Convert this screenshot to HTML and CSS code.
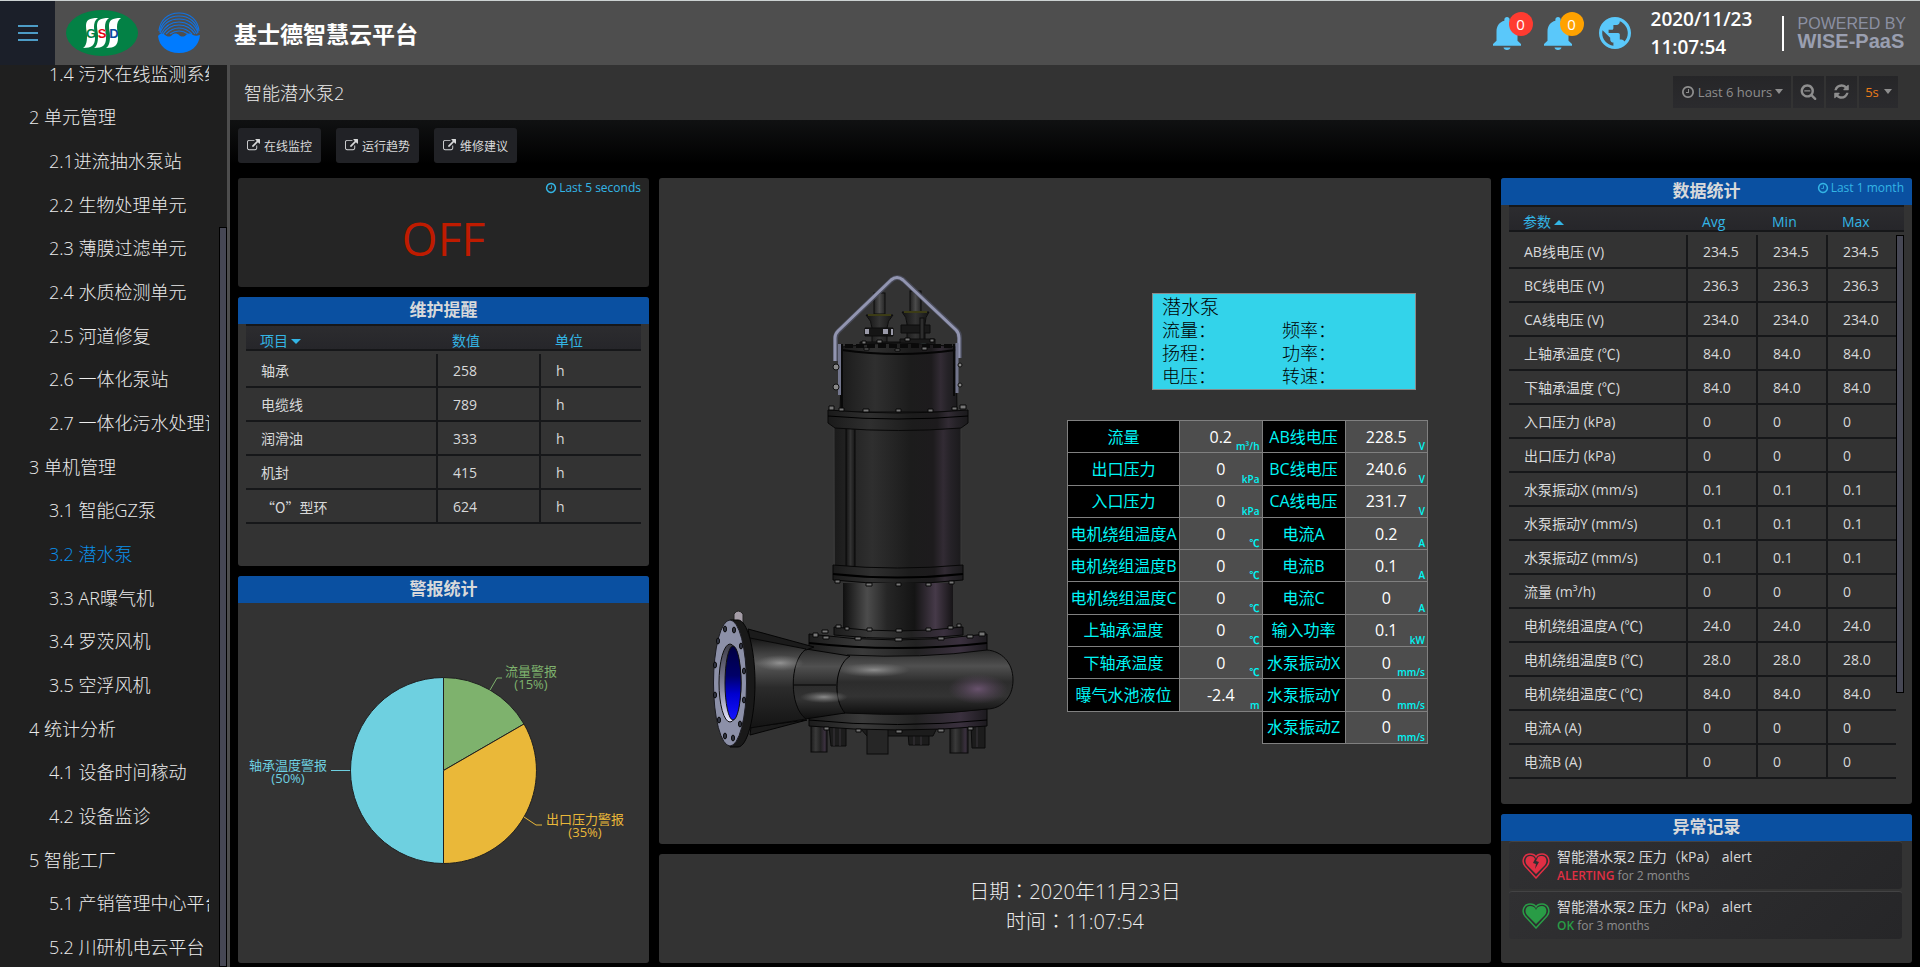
FILE: index.html
```
<!DOCTYPE html>
<html lang="zh-CN">
<head>
  <meta charset="UTF-8">
  <meta name="viewport" content="width=device-width, initial-scale=1.0">
  <title>基士德智慧云平台</title>
  <link rel="stylesheet" href="styles.css">
</head>
<body>
  <!-- Icon set -->
  <svg class="icon-defs" aria-hidden="true">
    <symbol id="icon-clock" viewBox="0 0 1792 1792"><path d="M1024 544v448q0 14-9 23t-23 9h-320q-14 0-23-9t-9-23v-64q0-14 9-23t23-9h224v-352q0-14 9-23t23-9h64q14 0 23 9t9 23zm416 352q0-148-73-273t-198-198-273-73-273 73-198 198-73 273 73 273 198 198 273 73 273-73 198-198 73-273zm224 0q0 209-103 385.500t-279.500 279.500-385.500 103-385.500-103-279.500-279.500-103-385.500 103-385.500 279.500-279.500 385.500-103 385.500 103 279.500 279.500 103 385.500z"/></symbol>
    <symbol id="icon-link" viewBox="0 0 1792 1792"><path d="M1408 928v320q0 119-84.500 203.500t-203.500 84.500h-832q-119 0-203.500-84.500t-84.500-203.500v-832q0-119 84.500-203.500t203.500-84.500h704q14 0 23 9t9 23v64q0 14-9 23t-23 9h-704q-66 0-113 47t-47 113v832q0 66 47 113t113 47h832q66 0 113-47t47-113v-320q0-14 9-23t23-9h64q14 0 23 9t9 23zm384-864v512q0 26-19 45t-45 19-45-19l-176-176-652 652q-10 10-23 10t-23-10l-114-114q-10-10-10-23t10-23l652-652-176-176q-19-19-19-45t19-45 45-19h512q26 0 45 19t19 45z"/></symbol>
    <symbol id="icon-zoom-out" viewBox="0 0 1792 1792"><path d="M1088 800v64q0 13-9.500 22.500t-22.500 9.500h-576q-13 0-22.500-9.500t-9.500-22.500v-64q0-13 9.500-22.500t22.500-9.500h576q13 0 22.500 9.500t9.500 22.500zm128 32q0-185-131.500-316.500t-316.500-131.500-316.500 131.500-131.500 316.500 131.500 316.500 316.500 131.500 316.500-131.500 131.500-316.500zm512 832q0 53-37.500 90.500t-90.500 37.500q-54 0-90-38l-343-342q-179 124-399 124-143 0-273.500-55.500t-225-150-150-225-55.500-273.500 55.500-273.500 150-225 225-150 273.500-55.500 273.500 55.500 225 150 150 225 55.500 273.500q0 220-124 399l343 343q37 37 37 90z"/></symbol>
    <symbol id="icon-refresh" viewBox="0 0 1792 1792"><path d="M1639 1056q0 5-1 7-64 268-268 434.500t-478 166.500q-146 0-282.500-55t-243.500-157l-129 129q-19 19-45 19t-45-19-19-45v-448q0-26 19-45t45-19h448q26 0 45 19t19 45-19 45l-137 137q71 66 161 102t187 36q134 0 250-65t186-179q11-17 53-117 8-23 30-23h192q13 0 22.500 9.500t9.500 22.500zm25-800v448q0 26-19 45t-45 19h-448q-26 0-45-19t-19-45 19-45l138-138q-148-137-349-137-134 0-250 65t-186 179q-11 17-53 117-8 23-30 23h-199q-13 0-22.500-9.500t-9.500-22.500v-7q65-268 270-434.500t480-166.500q146 0 284 55.500t245 156.500l130-129q19-19 45-19t45 19 19 45z"/></symbol>
    <symbol id="icon-bell" viewBox="4 2.500 16 19.500" preserveAspectRatio="none"><path d="M12 22c1.100 0 2-.9 2-1.500h-4c0 .6.890 1.500 2 1.500zM18 16.500v-5.500c0-3.070-1.640-5.640-4.500-6.320V4c0-.83-.67-1.500-1.500-1.500s-1.500.67-1.500 1.500v.68C7.630 5.360 6 7.920 6 11v5.500l-2 2v1h16v-1l-2-2z"/></symbol>
    <symbol id="icon-globe" viewBox="2 2 20 20"><path d="M12 2C6.480 2 2 6.480 2 12s4.480 10 10 10 10-4.480 10-10S17.520 2 12 2zm-1 17.930c-3.950-.49-7-3.850-7-7.930 0-.62.080-1.210.210-1.790L9 15v1c0 1.100.9 2 2 2v1.930zm6.900-2.540c-.26-.81-1-1.390-1.900-1.390h-1v-3c0-.55-.45-1-1-1H8v-2h2c.55 0 1-.45 1-1V7h2c1.100 0 2-.9 2-2v-.41c2.930 1.190 5 4.060 5 7.410 0 2.080-.8 3.970-2.100 5.390z"/></symbol>
  </svg>

  <!-- Top bar -->
  <header class="topbar">
    <button class="menu-btn" aria-label="菜单"><span></span><span></span><span></span></button>
    <svg class="logo-gsd" viewBox="0 0 72 46">
      <ellipse cx="36" cy="23" rx="36" ry="23" fill="#038145"/>
      <g fill="#fff">
        <path d="M32 8c-9 0-12 2-12 8 0 4 1 6 1 10 0 6-1 10-4 12 9 0 12-3 12-10 0-4-1-7-1-11s1-7 4-9z"/>
        <path d="M43 8c-9 0-12 2-12 8 0 4 1 6 1 10 0 6-1 10-4 12 9 0 12-3 12-10 0-4-1-7-1-11s1-7 4-9z"/>
        <path d="M55 8c-9 0-12 2-12 8 0 4 1 6 1 10 0 6-1 10-4 12 9 0 12-3 12-10 0-4-1-7-1-11s1-7 4-9z"/>
      </g>
      <g class="logo-letters">
        <text x="25" y="28" fill="#038145">G</text>
        <text x="36" y="28" fill="#e60012">S</text>
        <text x="48" y="28" fill="#0a4ba0">D</text>
      </g>
    </svg>
    <svg class="logo-water" viewBox="0 0 42 42">
      <path d="M0 24c3-3 5-3 7-1 3 2 5 2 7 0s5-2 7 0 5 2 7 0 5-2 7 0c2 1 4 1 7 0-1 11-9 18-21 18S1 34 0 24z" fill="#007bff"/>
      <g fill="none" stroke="#1272e0" stroke-width="1.200">
        <path d="M1 19C2 8 10 1 21 1s19 7 20 18"/>
        <path d="M2 20C3 10 11 4 21 4s18 6 19 16"/>
        <path d="M2 21C5 12 12 7 21 7s16 5 19 14"/>
        <path d="M3 22c4-8 10-12 18-12s14 4 18 12"/>
        <path d="M5 22c4-6 9-9 16-9s12 3 16 9"/>
        <path d="M8 22c4-4 8-6 13-6s9 2 13 6"/>
        <path d="M12 22c3-2 6-3 9-3s6 1 9 3"/>
      </g>
    </svg>
    <h1 class="site-title">基士德智慧云平台</h1>

    <div class="topbar-right">
      <button class="bell-btn" aria-label="告警"><svg><use href="#icon-bell"/></svg><span class="badge badge-red">0</span></button>
      <button class="bell-btn" aria-label="通知"><svg><use href="#icon-bell"/></svg><span class="badge badge-orange">0</span></button>
      <button class="globe-btn" aria-label="语言"><svg><use href="#icon-globe"/></svg></button>
      <div class="clock">2020/11/23<br>11:07:54</div>
      <div class="powered"><span class="powered-by">POWERED BY</span><span class="powered-name">WISE-PaaS</span></div>
    </div>
  </header>

  <div class="layout">
    <!-- Side menu -->
    <nav class="sidebar">
      <ul>
        <li class="sub"><a href="#">1.4 污水在线监测系统</a></li>
        <li><a href="#">2 单元管理</a></li>
        <li class="sub"><a href="#">2.1进流抽水泵站</a></li>
        <li class="sub"><a href="#">2.2 生物处理单元</a></li>
        <li class="sub"><a href="#">2.3 薄膜过滤单元</a></li>
        <li class="sub"><a href="#">2.4 水质检测单元</a></li>
        <li class="sub"><a href="#">2.5 河道修复</a></li>
        <li class="sub"><a href="#">2.6 一体化泵站</a></li>
        <li class="sub"><a href="#">2.7 一体化污水处理设备</a></li>
        <li><a href="#">3 单机管理</a></li>
        <li class="sub"><a href="#">3.1 智能GZ泵</a></li>
        <li class="sub active"><a href="#">3.2 潜水泵</a></li>
        <li class="sub"><a href="#">3.3 AR曝气机</a></li>
        <li class="sub"><a href="#">3.4 罗茨风机</a></li>
        <li class="sub"><a href="#">3.5 空浮风机</a></li>
        <li><a href="#">4 统计分析</a></li>
        <li class="sub"><a href="#">4.1 设备时间稼动</a></li>
        <li class="sub"><a href="#">4.2 设备监诊</a></li>
        <li><a href="#">5 智能工厂</a></li>
        <li class="sub"><a href="#">5.1 产销管理中心平台</a></li>
        <li class="sub"><a href="#">5.2 川研机电云平台</a></li>
      </ul>
      <div class="sidebar-thumb"></div>
    </nav>

    <main class="main">
      <div class="page-bar">
        <h2>智能潜水泵2</h2>
        <div class="time-tools">
          <button class="tool tool-range"><svg><use href="#icon-clock"/></svg>Last 6 hours<i class="caret"></i></button>
          <button class="tool tool-icon" aria-label="缩小"><svg><use href="#icon-zoom-out"/></svg></button>
          <button class="tool tool-icon" aria-label="刷新"><svg><use href="#icon-refresh"/></svg></button>
          <button class="tool tool-interval">5s<i class="caret"></i></button>
        </div>
      </div>

      <div class="dashboard">
        <div class="links">
          <a class="link-btn" href="#"><svg><use href="#icon-link"/></svg>在线监控</a>
          <a class="link-btn" href="#"><svg><use href="#icon-link"/></svg>运行趋势</a>
          <a class="link-btn" href="#"><svg><use href="#icon-link"/></svg>维修建议</a>
        </div>

        <div class="panels">
          <!-- Status -->
          <section class="panel panel-status">
            <span class="panel-time"><svg><use href="#icon-clock"/></svg>Last 5 seconds</span>
            <p class="status-value">OFF</p>
          </section>

          <!-- Maintenance -->
          <section class="panel panel-maintain">
            <h3 class="panel-title">维护提醒</h3>
            <div class="table-wrap">
              <table class="data-table maintain-table">
                <thead>
                  <tr><th>项目<i class="caret"></i></th><th>数值</th><th>单位</th></tr>
                </thead>
                <tbody>
                  <tr><td>轴承</td><td>258</td><td>h</td></tr>
                  <tr><td>电缆线</td><td>789</td><td>h</td></tr>
                  <tr><td>润滑油</td><td>333</td><td>h</td></tr>
                  <tr><td>机封</td><td>415</td><td>h</td></tr>
                  <tr><td class="cjk">“O”型环</td><td>624</td><td>h</td></tr>
                </tbody>
              </table>
            </div>
          </section>

          <!-- Alarm pie -->
          <section class="panel panel-pie">
            <h3 class="panel-title">警报统计</h3>
            <svg class="pie" viewBox="0 0 395 336">
              <g stroke="#1f1f20" stroke-width="1">
                <path d="M197.500 167.500V74.500A93 93 0 0 1 278 121Z" fill="#7eb26d"/>
                <path d="M197.500 167.500L278 121A93 93 0 0 1 197.500 260.500Z" fill="#eab839"/>
                <path d="M197.500 167.500V260.500A93 93 0 0 1 197.500 74.500Z" fill="#6ed0e0"/>
              </g>
              <g fill="none" stroke-width="1">
                <path d="M244 87l7-12h5" stroke="#7eb26d"/>
                <path d="M278 214l12 8h6" stroke="#eab839"/>
                <path d="M104 167.500H85" stroke="#6ed0e0"/>
              </g>
              <g class="pie-labels">
                <text x="285" y="73" fill="#7eb26d">流量警报</text>
                <text x="285" y="86" fill="#7eb26d">(15%)</text>
                <text x="339" y="221" fill="#eab839">出口压力警报</text>
                <text x="339" y="234" fill="#eab839">(35%)</text>
                <text x="42" y="167" fill="#6ed0e0">轴承温度警报</text>
                <text x="42" y="180" fill="#6ed0e0">(50%)</text>
              </g>
            </svg>
          </section>

          <!-- Pump -->
          <section class="panel panel-pump">
            <svg class="pump" viewBox="710 273 305 484">
              <defs>
                <linearGradient id="body">
                  <stop offset="0" stop-color="#1a1a1a"/><stop offset=".12" stop-color="#232323"/>
                  <stop offset=".3" stop-color="#2f2f2f"/><stop offset=".6" stop-color="#1c1c1c"/>
                  <stop offset=".78" stop-color="#1d1b1d"/><stop offset=".86" stop-color="#322b34"/>
                  <stop offset=".92" stop-color="#252227"/><stop offset="1" stop-color="#1b1a1c"/>
                </linearGradient>
                <linearGradient id="neck">
                  <stop offset="0" stop-color="#0f0f0f"/><stop offset=".22" stop-color="#4c4c4c"/>
                  <stop offset=".4" stop-color="#262626"/><stop offset=".65" stop-color="#141414"/>
                  <stop offset=".84" stop-color="#463a49"/><stop offset="1" stop-color="#161416"/>
                </linearGradient>
                <linearGradient id="plate">
                  <stop offset="0" stop-color="#1c1c1c"/><stop offset=".3" stop-color="#3a3a3a"/>
                  <stop offset=".6" stop-color="#222"/><stop offset=".85" stop-color="#3a303e"/>
                  <stop offset="1" stop-color="#1c1a1e"/>
                </linearGradient>
                <linearGradient id="volute" x1="0" y1="0" x2="0" y2="1">
                  <stop offset="0" stop-color="#2b2b2b"/><stop offset=".25" stop-color="#505050"/>
                  <stop offset=".5" stop-color="#2c2c2c"/><stop offset=".72" stop-color="#333"/>
                  <stop offset="1" stop-color="#0e0e0e"/>
                </linearGradient>
                <linearGradient id="cone" x1="0" y1="0" x2="0" y2="1">
                  <stop offset="0" stop-color="#161616"/><stop offset=".28" stop-color="#5a5a5a"/>
                  <stop offset=".55" stop-color="#2b2b2b"/><stop offset="1" stop-color="#141414"/>
                </linearGradient>
                <linearGradient id="stem">
                  <stop offset="0" stop-color="#222"/><stop offset=".5" stop-color="#4b4b4b"/><stop offset="1" stop-color="#242424"/>
                </linearGradient>
                <linearGradient id="gland">
                  <stop offset="0" stop-color="#121212"/><stop offset=".5" stop-color="#333"/><stop offset="1" stop-color="#141414"/>
                </linearGradient>
                <linearGradient id="water" x1="0" y1="0" x2="0" y2="1">
                  <stop offset="0" stop-color="#000040"/><stop offset=".4" stop-color="#000068"/>
                  <stop offset=".65" stop-color="#0000d0"/><stop offset="1" stop-color="#1414ff"/>
                </linearGradient>
                <linearGradient id="bore" x1="0" y1="0" x2="0" y2="1">
                  <stop offset="0" stop-color="#3c3c48"/><stop offset=".6" stop-color="#8c8ca4"/><stop offset="1" stop-color="#e6e6ff"/>
                </linearGradient>
                <radialGradient id="shine"><stop offset="0" stop-color="#a0a0a0" stop-opacity=".8"/><stop offset="1" stop-color="#808080" stop-opacity="0"/></radialGradient>
                <radialGradient id="violet"><stop offset="0" stop-color="#6f5674" stop-opacity=".9"/><stop offset="1" stop-color="#5a465e" stop-opacity="0"/></radialGradient>
              </defs>

              <!-- feet -->
              <g fill="#1c1c1c" stroke="#0b0b0b">
                <path d="M829 726h17v20h-15zM908 733h21v12h-20zM971 725h14v23h-13z"/>
                <path d="M834 727v19M840 727v19M914 735v10M921 735v10M977 727v20" stroke="#3a363c"/>
                <rect x="811" y="724" width="16" height="28" fill="url(#plate)"/>
                <rect x="950" y="724" width="18" height="29" fill="url(#plate)"/>
                <path d="M860 728h77l-4 8h-66z"/>
                <rect x="867" y="727" width="21" height="27" fill="#262626"/>
              </g>

              <!-- cable glands -->
              <g stroke="#0d0d0d">
                <rect x="874" y="293" width="11" height="21" fill="url(#stem)"/>
                <path d="M866 315h27q-6 6-6 13v16h-15v-16q0-7-6-13z" fill="url(#gland)"/>
                <path d="M865 328h28v8h-28z" fill="#151515"/>
                <rect x="910" y="291" width="11" height="21" fill="url(#stem)"/>
                <path d="M902 312h27q-4 5-4 12v20h-18v-20q0-7-5-12z" fill="url(#gland)"/>
                <path d="M901 325h29v8h-29z" fill="#191919"/>
                <rect x="920" y="318" width="4" height="26" fill="#2d2d2d"/>
                <path d="M860 342h40v6h-40zM900 339h35v8h-35z" fill="#1a1a1a"/>
              </g>
              <path d="M868 315h23M904 312h23" stroke="#3c3c16" stroke-width="2"/>
              <path d="M865 329h4v5h-4zM883 329h5v5h-5zM891 329h2v6h-2z" fill="#9a9aa8"/>
              <path d="M916 345q6-4 13 0l-6 2z" fill="#6d8685"/>

              <!-- motor -->
              <path d="M842 347q56-8 114 0l1 65H840z" fill="url(#body)" stroke="#0a0a0a"/>
              <path d="M842 350q56 8 114 0" fill="none" stroke="#050505" stroke-width="2"/>
              <path d="M845 346h109" stroke="#0a0a0a" stroke-width="4" stroke-dasharray="8 3"/>
              <path d="M834 426h127v142H835z" fill="url(#body)"/>
              <path d="M834 426v142M961 426v142" stroke="#3b3b3b"/>
              <rect x="846" y="426" width="9" height="141" fill="url(#gland)" stroke="#080808"/>
              <path d="M835 425q62 9 126 0v3q-62 5-126 0z" fill="#070707"/>
              <path d="M828 410q70 6 140 0v13l-7 5q-62 5-126 0l-7-5z" fill="url(#body)" stroke="#090909"/>
              <path d="M828 416q70 6 140 0" fill="none" stroke="#000"/>
              <path d="M833 565q64 6 130 0v15q-64 7-130 0z" fill="url(#body)" stroke="#070707"/>
              <path d="M833 574q64 7 130 0" fill="none" stroke="#000" stroke-width="2"/>
              <path d="M843 583h110v50H843z" fill="url(#neck)"/>

              <!-- handle -->
              <g fill="none">
                <path d="M835.500 361v-23q0-4 3-7l53-51q6-5 12 0l53 50q3 3 3 8v20" stroke="#484a58" stroke-width="5"/>
                <path d="M835 361v-23q0-4 3-7l53-51q6-5 12 0l53 50q3 3 3 8v20" stroke="#9295b0" stroke-width="3"/>
                <path d="M839.500 344v51M957 343v50" stroke="#73768d" stroke-width="3"/>
                <path d="M842 344v66M954 344v52" stroke="#090909" stroke-width="2"/>
              </g>
              <g fill="#888" stroke="#111">
                <circle cx="836" cy="367" r="3"/><circle cx="836" cy="387" r="3"/>
                <circle cx="960" cy="365" r="2"/><circle cx="960" cy="385" r="2"/>
              </g>

              <!-- volute -->
              <path d="M809 709q88 10 178 0v17q-88 8-178 0z" fill="url(#plate)" stroke="#060606"/>
              <path d="M809 720q88 9 178 0" fill="none" stroke="#000"/>
              <path d="M834 627q64 8 129 0v8q-64 7-129 0z" fill="url(#plate)" stroke="#080808"/>
              <path d="M809 634q88 12 178 0v20q-88 12-178 0z" fill="url(#plate)" stroke="#060606"/>
              <path d="M809 643q88 10 178 0" fill="none" stroke="#000" stroke-width="2"/>
              <path d="M847 655q75 4 140-5c14 1 26 12 26 30s-12 29-26 29q-65 8-144 4c-8-12-10-42 4-58z" fill="url(#volute)" stroke="#090909"/>
              <ellipse cx="874" cy="670" rx="36" ry="7" fill="url(#shine)"/>
              <ellipse cx="978" cy="689" rx="30" ry="15" fill="url(#violet)"/>
              <path d="M806 649l44 7c-16 10-17 44-5 57l-40 6c-16-12-17-58 1-70z" fill="url(#volute)" stroke="#050505"/>
              <ellipse cx="824" cy="697" rx="24" ry="6" fill="url(#shine)"/>
              <path d="M792 685h44" stroke="#050505"/>
              <path d="M748 629l66 18-8 3-56-11zM750 735l57-15-56 7z" fill="#1b1b1b" stroke="#050505"/>
              <path d="M750 638l56 11c-17 12-17 58 0 70l-56 9z" fill="url(#cone)" stroke="#080808"/>
              <ellipse cx="780" cy="663" rx="24" ry="8" fill="url(#shine)"/>

              <!-- outlet flange -->
              <path d="M734 614q4-6 9 0v11h-9z" fill="#a49ca6" stroke="#222"/>
              <path d="M730 620h8c9 0 17 28 17 63s-8 64-17 64h-8z" fill="#191919" stroke="#050505"/>
              <ellipse cx="730" cy="683" rx="16.500" ry="63" fill="#8c90a8" stroke="#1c1c22"/>
              <ellipse cx="730" cy="683" rx="11" ry="39" fill="url(#bore)" stroke="#111"/>
              <ellipse cx="733" cy="683" rx="8" ry="37" fill="url(#water)" stroke="#111"/>
              <g fill="#333645" stroke="#0a0a0a">
                <ellipse cx="725" cy="629" rx="1.500" ry="3"/><ellipse cx="734" cy="630" rx="1.500" ry="3"/>
                <ellipse cx="718" cy="641" rx="1.500" ry="3"/><ellipse cx="741" cy="646" rx="1.500" ry="3"/>
                <ellipse cx="715" cy="665" rx="1.500" ry="3"/><ellipse cx="744" cy="671" rx="1.500" ry="3"/>
                <ellipse cx="715" cy="695" rx="1.500" ry="3"/><ellipse cx="744" cy="700" rx="1.500" ry="3"/>
                <ellipse cx="719" cy="720" rx="1.500" ry="3"/><ellipse cx="740" cy="724" rx="1.500" ry="3"/>
                <ellipse cx="725" cy="736" rx="1.500" ry="3"/><ellipse cx="733" cy="738" rx="1.500" ry="3"/>
              </g>

              <!-- bolts -->
              <g fill="#777" stroke="#080808">
                <path d="M829 406h5v4h-5zM839 408h5v3h-5zM863 409h6v3h-6zM896 409h5v3h-5zM928 409h5v3h-5zM952 407h5v3h-5zM960 405h6v4h-6z"/>
                <path d="M864 348h5v2h-5zM895 349h5v2h-5zM922 347h5v3h-5zM877 340h5v3h-5zM862 341h4v3h-4zM905 338h5v3h-5zM930 339h4v3h-4z"/>
                <path d="M835 580h5v3h-5zM866 583h6v3h-6zM896 583h5v3h-5zM926 583h5v3h-5zM949 581h5v3h-5z"/>
                <path d="M836 625h5v3h-5zM845 627h4v3h-4zM867 628h5v3h-5zM896 629h6v3h-6zM926 628h5v3h-5zM948 626h5v3h-5zM957 624h4v3h-4z"/>
                <path d="M813 633h5v4h-5zM822 630h6v3h-6zM823 636h6v3h-6zM855 637h6v3h-6zM895 638h7v3h-7zM938 637h6v3h-6zM967 635h6v3h-6zM979 632h6v4h-6z"/>
                <path d="M824 727h5v3h-5zM856 729h5v3h-5zM896 730h6v3h-6zM938 729h6v3h-6zM968 727h5v3h-5z"/>
              </g>
            </svg>

            <div class="pump-info">
              <dl class="spec-box">
                <dt class="spec-name">潜水泵</dt>
                <dt>流量：</dt><dt>频率：</dt>
                <dt>扬程：</dt><dt>功率：</dt>
                <dt>电压：</dt><dt>转速：</dt>
              </dl>
              <table class="live-table">
                <tr><th>流量</th><td>0.2<small>m³/h</small></td><th>AB线电压</th><td>228.5<small>V</small></td></tr>
                <tr><th>出口压力</th><td>0<small>kPa</small></td><th>BC线电压</th><td>240.6<small>V</small></td></tr>
                <tr><th>入口压力</th><td>0<small>kPa</small></td><th>CA线电压</th><td>231.7<small>V</small></td></tr>
                <tr><th>电机绕组温度A</th><td>0<small>℃</small></td><th>电流A</th><td>0.2<small>A</small></td></tr>
                <tr><th>电机绕组温度B</th><td>0<small>℃</small></td><th>电流B</th><td>0.1<small>A</small></td></tr>
                <tr><th>电机绕组温度C</th><td>0<small>℃</small></td><th>电流C</th><td>0<small>A</small></td></tr>
                <tr><th>上轴承温度</th><td>0<small>℃</small></td><th>输入功率</th><td>0.1<small>kW</small></td></tr>
                <tr><th>下轴承温度</th><td>0<small>℃</small></td><th>水泵振动X</th><td>0<small>mm/s</small></td></tr>
                <tr><th>曝气水池液位</th><td>-2.4<small>m</small></td><th>水泵振动Y</th><td>0<small>mm/s</small></td></tr>
                <tr><td class="blank" colspan="2"></td><th>水泵振动Z</th><td>0<small>mm/s</small></td></tr>
              </table>
            </div>
          </section>

          <!-- Date -->
          <section class="panel panel-date" lang="zh-TW">
            <p>日期：2020年11月23日</p>
            <p>时间：11:07:54</p>
          </section>

          <!-- Statistics -->
          <section class="panel panel-stats">
            <h3 class="panel-title">数据统计</h3>
            <span class="panel-time"><svg><use href="#icon-clock"/></svg>Last 1 month</span>
            <div class="table-wrap has-scroll">
              <table class="data-table stats-table">
                <thead>
                  <tr><th>参数<i class="caret caret-up"></i></th><th>Avg</th><th>Min</th><th>Max</th></tr>
                </thead>
                <tbody>
                  <tr><td>AB线电压 (V)</td><td>234.5</td><td>234.5</td><td>234.5</td></tr>
                  <tr><td>BC线电压 (V)</td><td>236.3</td><td>236.3</td><td>236.3</td></tr>
                  <tr><td>CA线电压 (V)</td><td>234.0</td><td>234.0</td><td>234.0</td></tr>
                  <tr><td>上轴承温度 (℃)</td><td>84.0</td><td>84.0</td><td>84.0</td></tr>
                  <tr><td>下轴承温度 (℃)</td><td>84.0</td><td>84.0</td><td>84.0</td></tr>
                  <tr><td>入口压力 (kPa)</td><td>0</td><td>0</td><td>0</td></tr>
                  <tr><td>出口压力 (kPa)</td><td>0</td><td>0</td><td>0</td></tr>
                  <tr><td>水泵振动X (mm/s)</td><td>0.1</td><td>0.1</td><td>0.1</td></tr>
                  <tr><td>水泵振动Y (mm/s)</td><td>0.1</td><td>0.1</td><td>0.1</td></tr>
                  <tr><td>水泵振动Z (mm/s)</td><td>0.1</td><td>0.1</td><td>0.1</td></tr>
                  <tr><td>流量 (m³/h)</td><td>0</td><td>0</td><td>0</td></tr>
                  <tr><td>电机绕组温度A (℃)</td><td>24.0</td><td>24.0</td><td>24.0</td></tr>
                  <tr><td>电机绕组温度B (℃)</td><td>28.0</td><td>28.0</td><td>28.0</td></tr>
                  <tr><td>电机绕组温度C (℃)</td><td>84.0</td><td>84.0</td><td>84.0</td></tr>
                  <tr><td>电流A (A)</td><td>0</td><td>0</td><td>0</td></tr>
                  <tr><td>电流B (A)</td><td>0</td><td>0</td><td>0</td></tr>
                </tbody>
              </table>
              <div class="table-thumb"></div>
            </div>
          </section>

          <!-- Alerts -->
          <section class="panel panel-alerts">
            <h3 class="panel-title">异常记录</h3>
            <ul class="alert-list">
              <li>
                <svg class="heart" viewBox="0 0 28 26">
                  <path d="M14 25L3 13C-1 8 2 1 8 1c3 0 5 1 6 3 1-2 3-3 6-3 6 0 9 7 5 12z" fill="none" stroke="#e02f44" stroke-width="1.500"/>
                  <path d="M14 21L5 12C2 8 4 3 8 3c3 0 4 1 5 3l-2 4 3 1-1 5 4-7-3-1 2-4c1-1 2-1 4-1 4 0 6 5 3 9z" fill="#e02f44"/>
                </svg>
                <div>
                  <p class="alert-name">智能潜水泵2 压力（kPa） alert</p>
                  <p class="alert-state"><b class="state-bad">ALERTING</b> for 2 months</p>
                </div>
              </li>
              <li>
                <svg class="heart" viewBox="0 0 28 26">
                  <path d="M14 25L3 13C-1 8 2 1 8 1c3 0 5 1 6 3 1-2 3-3 6-3 6 0 9 7 5 12z" fill="none" stroke="#299c46" stroke-width="1.500"/>
                  <path d="M14 21L5 12C2 8 4 3 8 3c3 0 5 1 6 4 1-3 3-4 6-4 4 0 6 5 3 9z" fill="#299c46"/>
                </svg>
                <div>
                  <p class="alert-name">智能潜水泵2 压力（kPa） alert</p>
                  <p class="alert-state"><b class="state-ok">OK</b> for 3 months</p>
                </div>
              </li>
            </ul>
          </section>
        </div>
      </div>
    </main>
  </div>
</body>
</html>
```

FILE: styles.css
```
* {
  box-sizing: border-box;
}
body {
  margin: 0;
  height: 100vh;
  display: flex;
  flex-direction: column;
  overflow: hidden;
  border-top: 1px solid #ccd2d2;
  background: #000;
  color: #d8d9da;
  font-family: "Open Sans", "Noto Sans CJK SC", sans-serif;
  font-size: 14px;
}
h1, h2, h3, p, ul, dl {
  margin: 0;
  padding: 0;
}
ul {
  list-style: none;
}
a {
  color: inherit;
  text-decoration: none;
}
button {
  border: none;
  padding: 0;
  background: none;
  color: inherit;
  font: inherit;
  cursor: pointer;
}
svg {
  fill: currentColor;
}
.icon-defs {
  position: absolute;
  width: 0;
  height: 0;
}

/* Top bar */
.topbar {
  display: flex;
  align-items: center;
  flex: none;
  height: 64px;
  background: #4e4e4e;
  color: white;
}
.menu-btn {
  display: flex;
  flex-direction: column;
  align-items: center;
  justify-content: center;
  gap: 5px;
  width: 55px;
  height: 100%;
  background: #1b1f29;
}
.menu-btn span {
  width: 20px;
  height: 2px;
  background: #4d9cc6;
}
.logo-gsd {
  width: 72px;
  height: 46px;
  margin-left: 11px;
}
.logo-letters {
  font: bold 13px "Liberation Sans", sans-serif;
  text-anchor: middle;
}
.logo-water {
  width: 42px;
  height: 42px;
  margin: 0 34px 0 20px;
}
.site-title {
  font-size: 23px;
  font-weight: 700;
}
.topbar-right {
  display: flex;
  align-items: center;
  height: 100%;
  margin-left: auto;
  padding-right: 14px;
}
.bell-btn {
  position: relative;
  width: 28px;
  height: 33px;
  margin-right: 23px;
  color: #5ac8fa;
}
.bell-btn svg,
.globe-btn svg {
  display: block;
  width: 100%;
  height: 100%;
}
.badge {
  position: absolute;
  top: -5px;
  right: -12px;
  width: 24px;
  height: 24px;
  border-radius: 50%;
  color: white;
  font-size: 15px;
  line-height: 24px;
  text-align: center;
}
.badge-red {
  background: #ff3b30;
}
.badge-orange {
  background: #ffa200;
}
.globe-btn {
  width: 32px;
  height: 32px;
  margin: 0 20px 0 4px;
  color: #5ac8fa;
}
.clock {
  width: 131px;
  font-size: 19px;
  font-weight: 600;
  line-height: 28px;
}
.powered {
  display: flex;
  flex-direction: column;
  height: 35px;
  padding-left: 14px;
  border-left: 2px solid white;
  color: #9a9fb0;
  white-space: nowrap;
}
.powered-by {
  font: 16px/15px "Liberation Sans", sans-serif;
  color: #8b90a2;
}
.powered-name {
  font: bold 20px/20px "Liberation Sans", sans-serif;
}

/* Side menu */
.layout {
  display: flex;
  flex: 1;
  min-height: 0;
}
.sidebar {
  position: relative;
  display: flex;
  flex: none;
  width: 230px;
  overflow: hidden;
  background: #1f1f1f;
  border-right: 3px solid #4d4d4d;
}
.sidebar ul {
  display: grid;
  grid-auto-rows: 1fr;
  flex: 1;
  margin: -14px 18px -1px 29px;
  overflow: hidden;
}
.sidebar li {
  display: flex;
  align-items: center;
  overflow: hidden;
  color: #ececec;
  font-size: 18px;
  font-weight: 300;
  white-space: nowrap;
}
.sidebar .sub {
  padding-left: 20px;
}
.sidebar .active {
  color: #0a90ea;
}
.sidebar-thumb {
  position: absolute;
  top: 162px;
  right: 0;
  bottom: 0;
  width: 8px;
  background: #464754;
  border: 1px solid black;
}

/* Page bar */
.main {
  display: flex;
  flex-direction: column;
  flex: 1;
  min-width: 0;
}
.page-bar {
  display: flex;
  align-items: center;
  justify-content: space-between;
  flex: none;
  height: 55px;
  padding: 0 22px 2px 14px;
  background: #333;
}
.page-bar h2 {
  color: #ececec;
  font-size: 18px;
  font-weight: 300;
}
.time-tools {
  display: flex;
  gap: 2px;
  color: #8e8e8e;
}
.tool {
  display: flex;
  align-items: center;
  justify-content: center;
  height: 32px;
  background: linear-gradient(180deg, #262628, #2b2b2e);
  font-size: 13px;
}
.tool-range {
  gap: 3px;
  width: 118px;
}
.tool-range svg {
  width: 14px;
  height: 14px;
}
.tool-icon {
  width: 31px;
}
.tool-icon svg {
  width: 17px;
  height: 17px;
}
.tool-interval {
  gap: 5px;
  width: 39px;
  color: #eb7b18;
}
.tool-interval .caret {
  color: #8e8e8e;
}
.caret {
  display: inline-block;
  width: 0;
  height: 0;
  border: 4px solid transparent;
  border-top: 5px solid currentColor;
  border-bottom: none;
}
.caret-up {
  border-top: none;
  border-bottom: 5px solid currentColor;
}

/* Dashboard */
.dashboard {
  display: flex;
  flex-direction: column;
  flex: 1;
  min-height: 0;
  padding: 8px 8px 4px;
  background: linear-gradient(180deg, #101112, #000 44px);
}
.links {
  display: flex;
  gap: 15px;
  margin-bottom: 15px;
}
.link-btn {
  display: flex;
  align-items: center;
  justify-content: center;
  gap: 4px;
  width: 83px;
  height: 35px;
  border-radius: 3px;
  background: #212226;
  font-size: 12px;
}
.link-btn svg {
  width: 13px;
  height: 13px;
}
.panels {
  display: grid;
  grid-template-columns: repeat(4, minmax(0, 1fr));
  grid-template-rows: repeat(20, minmax(0, 1fr));
  gap: 10px;
  flex: 1;
  min-height: 0;
}
.panel {
  position: relative;
  overflow: hidden;
  border-radius: 3px;
  background: #333;
}
.panel-status {
  grid-area: 1 / 1 / span 3 / span 1;
}
.panel-maintain {
  grid-area: 4 / 1 / span 7 / span 1;
}
.panel-pie {
  grid-area: 11 / 1 / span 10 / span 1;
}
.panel-pump {
  grid-area: 1 / 2 / span 17 / span 2;
}
.panel-date {
  grid-area: 18 / 2 / span 3 / span 2;
}
.panel-stats {
  grid-area: 1 / 4 / span 16 / span 1;
}
.panel-alerts {
  grid-area: 17 / 4 / span 4 / span 1;
}
.panel-title {
  height: 27px;
  background: #0a50a1;
  font-size: 17px;
  font-weight: 700;
  line-height: 25px;
  text-align: center;
}
.panel-time {
  position: absolute;
  top: 2px;
  right: 8px;
  display: flex;
  align-items: center;
  gap: 2px;
  color: #33b5e5;
  font-size: 12px;
  line-height: 16px;
}
.panel-time svg {
  width: 12px;
  height: 12px;
}

/* Status */
.panel-status {
  display: flex;
  align-items: center;
  justify-content: center;
  background: #252525;
}
.status-value {
  padding-top: 10px;
  color: #bf1b00;
  font-size: 46px;
  line-height: 48px;
}

/* Tables */
.table-wrap {
  position: relative;
  margin: 0 8px;
  background: linear-gradient(180deg, #161719 2px, #2c2c2f 2px, #26262a 25px, #161719 25px) 0 0 / 100% 27px no-repeat;
}
.has-scroll {
  padding-right: 8px;
}
.data-table {
  width: 100%;
  table-layout: fixed;
  border-collapse: separate;
  border-spacing: 0;
  line-height: 20px;
}
.data-table th {
  height: 30px;
  padding: 4px 0 0 14px;
  color: #33b5e5;
  font-weight: 400;
  text-align: left;
}
.data-table td {
  height: 34px;
  padding: 2px 0 0 15px;
  border-bottom: 2px solid #161719;
  border-right: 2px solid #161719;
  white-space: nowrap;
}
.data-table td:last-child {
  border-right: none;
}
.data-table .caret {
  margin: 0 0 2px 3px;
  border-left-width: 5px;
  border-right-width: 5px;
}
.maintain-table th:first-child {
  width: 192px;
}
.maintain-table th:last-child {
  width: 100px;
}
.stats-table th {
  width: 70px;
}
.stats-table th:first-child {
  width: auto;
}
.stats-table th:last-child {
  width: 68px;
}
.cjk {
  font-family: "Noto Sans CJK SC", sans-serif;
}
.table-thumb {
  position: absolute;
  top: 30px;
  right: 0;
  width: 8px;
  height: 458px;
  background: #464754;
  border: 1px solid black;
}

/* Pie */
.pie {
  display: block;
  width: calc(100% - 16px);
  margin: 0 8px;
}
.pie-labels {
  font-size: 13px;
  text-anchor: middle;
}

/* Pump */
.panel-pump {
  display: flex;
  align-items: flex-start;
  justify-content: space-between;
  padding: 95px 63px 0 51px;
}
.pump {
  width: 305px;
  height: 484px;
}
.pump-info {
  width: 361px;
  padding-top: 20px;
}
.spec-box {
  display: grid;
  grid-template-columns: 120px 1fr;
  width: 264px;
  margin: 0 0 30px 85px;
  padding: 1px 9px;
  border: 1px solid #8a8a8a;
  background: #33d3ea;
  color: #000;
  font-size: 18px;
  font-weight: 300;
  line-height: 23px;
}
.spec-name {
  grid-column: span 2;
  font-size: 19px;
  line-height: 24px;
}
.live-table {
  width: 100%;
  height: 324px;
  table-layout: fixed;
  border-collapse: collapse;
  font-size: 16px;
  line-height: 22px;
}
.live-table th {
  width: 83px;
  padding: 0;
  border: 1px solid #808080;
  background: black;
  color: #00f5f5;
  font-weight: 400;
  white-space: nowrap;
}
.live-table th:first-child {
  width: 112px;
}
.live-table td {
  position: relative;
  padding: 0;
  border: 1px solid #808080;
  background: #4d4d4d;
  color: white;
  text-align: center;
}
.live-table .blank {
  border: none;
  background: none;
}
.live-table small {
  position: absolute;
  right: 2px;
  bottom: 0;
  color: #00f5f5;
  font-size: 10px;
  font-weight: 600;
  line-height: 12px;
}

/* Date */
.panel-date {
  display: flex;
  flex-direction: column;
  align-items: center;
  justify-content: center;
  padding-bottom: 2px;
  color: #ececec;
  font-family: "Open Sans", "Noto Sans CJK TC", sans-serif;
  font-size: 20px;
  font-weight: 300;
  line-height: 30px;
}

/* Alerts */
.alert-list {
  display: flex;
  flex-direction: column;
  gap: 2px;
  padding: 0 10px 0 8px;
}
.alert-list li {
  display: flex;
  align-items: center;
  gap: 7px;
  height: 48px;
  padding-left: 13px;
  border-top: 1px solid #434344;
  border-radius: 3px;
  background: linear-gradient(135deg, #303032, #262628);
}
.heart {
  width: 28px;
  height: 26px;
}
.alert-name {
  line-height: 20px;
}
.alert-state {
  color: #8e8e8e;
  font-size: 12px;
  line-height: 18px;
}
.alert-state b {
  font-weight: 600;
}
.state-bad {
  color: #e02f44;
}
.state-ok {
  color: #299c46;
}
```
